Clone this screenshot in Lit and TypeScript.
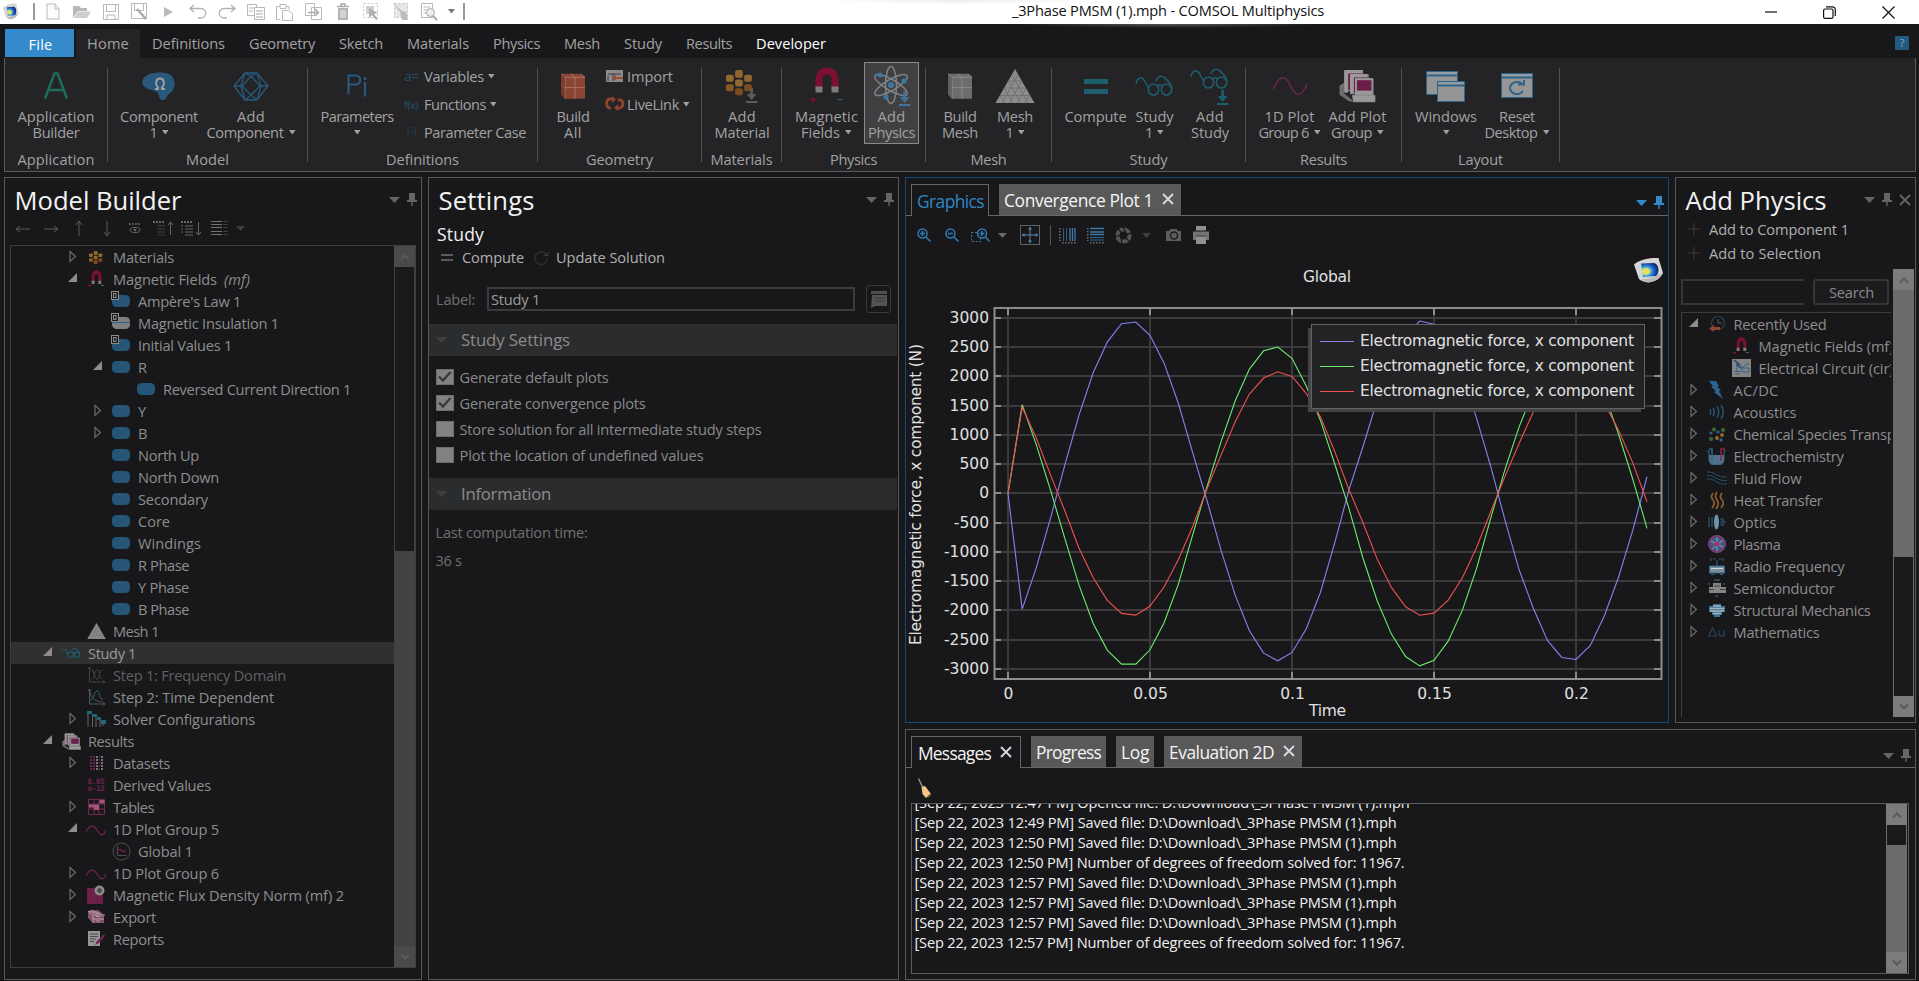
import { LitElement, html, svg, css, nothing, TemplateResult } from "lit";
import { customElement } from "lit/decorators.js";

/* ---------- text fitting ---------- */
const FAMILY = '"Open Sans"';
const ctx = document.createElement("canvas").getContext("2d")!;

/** Real text whose tracking is computed so that it advances exactly `w` pixels. */
function fit(text: string, w: number, size = 14.6, cls = "", style = "") {
  ctx.font = `${style} ${size}px ${FAMILY}`;
  const ls = (w + 1 - ctx.measureText(text).width) / text.length;
  return html`<span class="fit ${cls}" style="font-size:${size}px;letter-spacing:${ls.toFixed(3)}px">${text}</span>`;
}

/* ---------- icons ---------- */
type Icon = [number, number, TemplateResult];
const BLUE = "#28597c", TEAL = "#1d5f6e", PINK = "#6f2350", QA = "#b9b9b9";

const mats = svg`<g><rect x="0" y="4" width="5.5" height="6" rx="1.5" fill="#8f682f"/><rect x="6.500" y="0" width="5.500" height="6.500" rx="1.500" fill="#8f682f"/><rect x="13" y="4" width="5.500" height="6" rx="1.500" fill="#8f682f"/><rect x="6.500" y="8" width="5.500" height="6" rx="1.500" fill="#8f682f"/><rect x="0" y="12" width="5.500" height="6" rx="1.500" fill="#8a5a25"/><rect x="6.500" y="15.500" width="5.500" height="6" rx="1.500" fill="#7c4c1e"/><rect x="13" y="12" width="5.500" height="6" rx="1.500" fill="#7c4c1e"/></g>`;
const down = (c: string) => svg`<path d="M4.300 0h2.600v6h3.600L5.600 12 .7 6h3.600zM0 13h11.500v2H0z" fill="${c}"/>`;
const glasses = (sw: number) => svg`<g fill="none" stroke="${TEAL}" stroke-width="${sw}"><path d="M1 10C2 4 6 2 9 6c2 3 3 6 5 8"/><ellipse cx="18.500" cy="15.500" rx="5.200" ry="5.500"/><ellipse cx="31.500" cy="15.500" rx="5.200" ry="5.500"/><path d="M23 12c2-2 3-2 4 0M21 7c3-7 8-5 11-1 3 3 5 5 5 9"/></g>`;
const papers = svg`<g stroke="#9a9a9a"><path d="M1 21l4-3v13l9 9H11L1 32z" fill="#6c6c6c" stroke="#777"/><rect x="6" y="2" width="18" height="25" fill="#6a1f49"/><path d="M6 2h18v3H9v24H6z" fill="#9a9a9a"/><rect x="12" y="7" width="18" height="24" fill="#6a1f49"/><path d="M12 7h17v3H15v20h-3z" fill="#9a9a9a"/><rect x="17" y="12" width="18" height="20" fill="#9a9a9a"/><rect x="18.500" y="14" width="15" height="13" fill="#6a1f49" stroke="none"/><path d="M14 33h23v8H15z" fill="#9a9a9a"/></g>`;
const magnet = svg`<path d="M5 20V10a8 8 0 0 1 16 0v10" fill="none" stroke="#7c1031" stroke-width="7"/><path d="M1.500 17.500h7v6h-7zM17.500 17.500h7v6h-7z" fill="#7b7b7b"/>`;
const tri = svg`<path d="M20 0L39.500 34H0.500z" fill="#8c8c8c"/><path d="M17 6l16 28M13 12l13 22M9 19l9 15M5 26l5 8M23 6L7 34M27 12L14 34M31 19l-9 15M35 26l-5 8M13 12h14M9 19h22M5 26.500h30" stroke="#6c6c6c" stroke-width=".8"/>`;
const cube = (a: string, b: string, c: string) => svg`<path d="M0 1h20l4 4v25H4l-4-5z" fill="${a}"/><path d="M0 1l4 4h20M4 5v25M4 17h20M14 5v25M0 13l4 4M10 1l4 4M20 1l4 4" stroke="${b}" fill="none"/><path d="M0 1l4 4v25l-4-5z" fill="${c}" opacity=".6"/>`;
const win = (x: number, y: number, w: number, h: number) => svg`<rect x="${x + 0.5}" y="${y + 0.5}" width="${w}" height="${h}" fill="#969696" stroke="#2d6488"/><path d="M${x} ${y + 4.500}h${w}" stroke="#2d6488" stroke-width="2"/><path d="M${x + 2} ${y + 2}h${w - 3}" stroke="#8aa4b5"/>`;
const logoShape = svg`<defs><radialGradient id="lg" cx=".28" cy=".6" r=".75"><stop offset="0" stop-color="#f7e05a"/><stop offset=".28" stop-color="#d9dc70"/><stop offset=".42" stop-color="#37a5dd"/><stop offset=".7" stop-color="#1c4fb5"/><stop offset="1" stop-color="#0d1f63"/></radialGradient></defs><path d="M0 7.500C5 3 14 .5 24.500 1l4.500 15c-3 6-8 8.500-14.500 9.500C10 25 7 24 5 22z" fill="#d6d6d6"/><path d="M7 22c5 0 14-1 21-6-3 6-8 8.500-13.500 9.500C11 25 9 24 7 22z" fill="#b9b9b9"/><path d="M7 6.500L20 6c5 1 6 10 2 13L9 20z" fill="url(#lg)"/>`;
const pill = svg`<rect x="0" y="1" width="18" height="12" rx="4.500" fill="#265577"/>`;
const dBadge = svg`<rect x="-.5" y="-2.500" width="7" height="8" fill="#19191b" stroke="#8d8d8d"/><rect x="1.500" y="-.5" width="2.500" height="4" fill="none" stroke="#8d8d8d"/>`;
const wave = svg`<path d="M0 8C4 0 8 1 11 6s6 8 9 0" fill="none" stroke="${PINK}" stroke-width="1.200"/>`;
const axes = svg`<path d="M2.500 1v15H18M1 3l1.500-2L4 3M16 14l2 2-2 1.500" fill="none" stroke="#565656"/>`;

const ICONS: Record<string, Icon> = {
  logo: [16, 18, svg`<g transform="scale(.54 .64)">${logoShape}</g>`],
  bar: [2, 17, svg`<path d="M1 0v17" stroke="#777" stroke-width="1.500"/>`],
  new: [14, 17, svg`<path d="M1 1h8l4 5v10H1zM9 1v5h4" fill="#fcfcfc" stroke="${QA}"/>`],
  open: [18, 14, svg`<path d="M0 13V1h6l2 2h6v3H5z" fill="${QA}"/><path d="M5 6.500h13L14 13H1z" fill="#cfcfcf"/>`],
  save: [16, 16, svg`<path d="M.5.5h15v15H.5zM3.500.5v7h9v-7M4 15v-4h8v4" fill="none" stroke="${QA}"/>`],
  saveas: [17, 17, svg`<path d="M.5.5h15v15H.5zM3.500.5v7h9v-7" fill="none" stroke="${QA}"/><path d="M6 6l9 10" stroke="#aaa" stroke-width="2.500"/>`],
  play: [9, 10, svg`<path d="M0 0l9 5-9 5z" fill="${QA}"/>`],
  undo: [18, 15, svg`<path d="M1 4.500h11a4.500 4.500 0 0 1 0 9.500H9M5 1L1 4.500 5 8" fill="none" stroke="#b2b2b2" stroke-width="1.400"/>`],
  redo: [18, 15, svg`<path d="M17 4.500H6a4.500 4.500 0 0 0 0 9.500h3M13 1l4 3.500L13 8" fill="none" stroke="#b2b2b2" stroke-width="1.400"/>`],
  copy: [18, 16, svg`<path d="M.5.5h9v11h-9zM2 4h6M2 7h4" fill="none" stroke="${QA}"/><path d="M7.500 3.500h10v12h-10z" fill="#fff" stroke="${QA}"/><path d="M9 7h7M9 10h7M9 13h7" stroke="#aaa"/>`],
  paste: [17, 18, svg`<path d="M3.500 3.500h-3v13h4M10 3.500h3v3M4 1.500h6v4H4zM6.500 7.500h6l4 3v7h-10z" fill="none" stroke="${QA}"/>`],
  dup: [17, 17, svg`<path d="M.5.500h9v12h-9zM6.500 4.500h10v12h-10z" fill="none" stroke="${QA}"/><path d="M3 9.500h10M10 6l3.500 3.500L10 13" fill="none" stroke="#aaa" stroke-width="1.500"/>`],
  trash: [12, 17, svg`<path d="M0 3.500h12M4 3V1h4v2" stroke="#aaa" stroke-width="1.500" fill="none"/><path d="M1 5h10v12H1z" fill="#b5b5b5"/><path d="M4 7v8M6 7v8M8 7v8" stroke="#eee"/>`],
  select: [17, 17, svg`<rect x=".5" y=".5" width="14" height="14" fill="none" stroke="#c0c0c0" stroke-dasharray="2 2"/><rect x="3" y="3" width="8" height="8" fill="#d0d0d0"/><path d="M6 5l9 5-4 1 4 5-2 1-4-5-3 3z" fill="#b0b0b0"/>`],
  clear: [16, 17, svg`<rect x="1.500" y=".5" width="13" height="14" fill="#e6e6e6" stroke="#c0c0c0" stroke-dasharray="2 2"/><path d="M0 0l7 9 2 8h6l-2-8-4-1z" fill="#bdbdbd"/>`],
  find: [17, 18, svg`<path d="M.5.500h11v14H.500zM2.500 4h7M2.500 7h7M2.500 10h4" fill="none" stroke="${QA}"/><circle cx="9.500" cy="9.500" r="4" fill="#eee" stroke="#aaa"/><path d="M12 13l4 4" stroke="#aaa" stroke-width="2"/>`],
  qcaret: [7, 5, svg`<path d="M0 0h7L3.500 4.500z" fill="#777"/>`],
  caret: [7, 5, svg`<path d="M0 0h6.500L3.300 4.500z" fill="#a0a0a0"/>`],
  min: [12, 2, svg`<path d="M0 1h12" stroke="#111" stroke-width="1.200"/>`],
  restore: [13, 13, svg`<rect x=".6" y="3" width="9.400" height="9.400" rx="1.500" fill="none" stroke="#111" stroke-width="1.200"/><path d="M3 .8h6.500A2.800 2.800 0 0 1 12.300 3.600V10" fill="none" stroke="#111" stroke-width="1.200"/>`],
  close: [13, 13, svg`<path d="M.5.500l12 12M12.500.500l-12 12" stroke="#111" stroke-width="1.200"/>`],
  // ribbon
  A: [24, 26, svg`<path d="M1 25.500L10.500 0.500h3l9.500 25M5 17h14" fill="none" stroke="#1f6b57" stroke-width="2.600"/>`],
  comp: [34, 29, svg`<path d="M1 7C5 0 20-1 27 2c8 4 7 16 0 20-3 2-2 6-6 6-6 0-2-7-8-9C6 17-2 15 1 7z" fill="#28597c"/><path d="M13 17h3v-1.500c-3-3-2.500-9 2-9s5 6 2 9V17h3" fill="none" stroke="#a0a0a0" stroke-width="1.800"/>`],
  addcomp: [36, 29, svg`<path d="M12 1h12l11 13-11 14H12L1 14zM12 1l-4 13 4 14M24 1l4 13-4 14M1 14h8M28 14h7M18 4l9 10-9 9-9-9zM12 1l6 3 6-3M12 28l6-5 6 5" fill="none" stroke="${BLUE}" stroke-width="1.300"/>`],
  pi: [21, 24, svg`<path d="M1.500 20V1.500H8c7 0 7 9 0 9H2M18 8v14.500M18 3v3" fill="none" stroke="${BLUE}" stroke-width="2.200"/>`],
  pismall: [10, 12, svg`<path d="M1 10V1h3c3.500 0 3.500 5 0 5H1M8.500 4v7M8.500 1v2" fill="none" stroke="#22384c"/>`],
  geo: [24, 26, svg`<g transform="scale(1 .86)">${cube("#8b4433", "#a8786c", "#6e3427")}</g>`],
  meshcube: [24, 26, svg`<g transform="scale(1 .86)">${cube("#6c6c6c", "#8d8d8d", "#595959")}</g>`],
  import: [17, 13, svg`<rect width="17" height="12" fill="#8b8b8b"/><path d="M2 4h13M7 3v8M2 6v5" stroke="#3c3c3c"/><path d="M7 7h10v2H10v2L6 8l4-3.500V7z" fill="#a04a32"/>`],
  live: [20, 14, svg`<path d="M9 2H5C0 2 1 11 5 11h1M11 11h3c5 0 5-8 1-8h-2" fill="none" stroke="#8e432c" stroke-width="3"/><path d="M7-1l4 3.500L7 6zM13 7l-4 4 4 3z" fill="#8e432c"/>`],
  mat: [32, 34, svg`<g transform="translate(0 1) scale(1.400 1.180)">${mats}</g><g transform="translate(20 19)">${down("#5c5c5c")}</g>`],
  magnet: [34, 34, svg`<g transform="translate(4 0)">${magnet}</g><path d="M0 30.500h6M3 28v6" stroke="#7c1031" stroke-width="1.300"/><path d="M27 30.500h6" stroke="#2d5069" stroke-width="1.300"/>`],
  atom: [36, 40, svg`<g fill="none" stroke="#7f8285" stroke-width="1.500"><ellipse cx="17" cy="19" rx="5.500" ry="18.500"/><ellipse cx="17" cy="19" rx="5.500" ry="18.500" transform="rotate(60 17 19)"/><ellipse cx="17" cy="19" rx="5.500" ry="18.500" transform="rotate(-60 17 19)"/></g><g fill="#3a78a8"><circle cx="17" cy="19" r="3"/><circle cx="6" cy="9" r="2.500"/><circle cx="30" cy="15" r="2.500"/><circle cx="12" cy="31" r="2.500"/></g><g transform="translate(25 25)">${down("#3f7199")}</g>`],
  tri: [40, 34, tri],
  eq: [24, 15, svg`<path d="M0 0h24v5H0zM0 10h24v5H0z" fill="${TEAL}"/>`],
  glasses: [39, 24, glasses(1.5)],
  addglasses: [40, 38, svg`${glasses(1.5)}<g transform="translate(27 23)">${down(TEAL)}</g>`],
  wave: [36, 22, svg`<path d="M1 14C7 1 13-1 18 10s11 14 17-1" fill="none" stroke="${PINK}" stroke-width="1.500"/>`],
  papers: [38, 34, svg`<g transform="scale(.97 .8)">${papers}</g>`],
  windows: [40, 31, svg`${win(0, 0, 31, 23)}${win(11, 10, 27, 20)}`],
  reset: [33, 26, svg`${win(0, 0, 31, 24)}<path d="M22 12a7 6 0 1 0 0 6M17 11.500h6V7" fill="none" stroke="#2d6488" stroke-width="2"/>`],
  // panel chrome
  dcaret: [11, 6, svg`<path d="M0 0h11L5.500 6z" fill="currentColor"/>`],
  pin: [10, 13, svg`<path d="M2 0h6v7h2v2H5.700v4H4.300V9H0V7h2z" fill="currentColor"/>`],
  x: [12, 12, svg`<path d="M1 1l10 10M11 1L1 11" stroke="currentColor" stroke-width="1.800"/>`],
  left: [14, 8, svg`<path d="M0 4h14M4 1L0 4l4 3" stroke="#5a5a5a" fill="none"/>`],
  right: [14, 8, svg`<path d="M0 4h14M10 1l4 3-4 3" stroke="#5a5a5a" fill="none"/>`],
  up: [8, 15, svg`<path d="M4 15V0M1 4l3-4 3 4" stroke="#5a5a5a" fill="none"/>`],
  dn: [8, 15, svg`<path d="M4 0v15M1 11l3 4 3-4" stroke="#5a5a5a" fill="none"/>`],
  eye: [12, 9, svg`<path d="M0 0h12" stroke="#666" stroke-width="1.500" stroke-dasharray="2 1"/><ellipse cx="6" cy="6" rx="5" ry="2.500" fill="none" stroke="#666"/><circle cx="6" cy="6" r="1.300" fill="#666"/>`],
  coll: [20, 15, svg`<path d="M0 1h12" stroke="#666" stroke-width="2" stroke-dasharray="2 1"/><path d="M4 5h8M4 8h8M4 11h8M4 14h8" stroke="#3f3f3f"/><path d="M17.500 14V1M15 4l2.500-3L20 4" stroke="#666" fill="none"/>`],
  expd: [20, 15, svg`<path d="M0 1h12" stroke="#666" stroke-width="2" stroke-dasharray="2 1"/><path d="M0 5h2M4 5h8M0 8h2M4 8h8M0 11h2M4 11h8M4 14h8" stroke="#666"/><path d="M17.500 1v13M15 11l2.500 3 2.500-3" stroke="#666" fill="none"/>`],
  list: [17, 15, svg`<path d="M0 .5h11M0 3.500h11M0 6.500h11M0 10.500h11M0 13.500h11" stroke="#737373"/><path d="M12.500 .5h4M12.500 3.500h4M12.500 6.500h4M12.500 10.500h4M12.500 13.500h4" stroke="#444"/>`],
  smallcaret: [9, 5, svg`<path d="M0 0h9L4.500 5z" fill="#3e3e40"/>`],
  midcaret: [9, 5, svg`<path d="M0 0h9L4.500 5z" fill="#6a6a6a"/>`],
  open_t: [10, 10, svg`<path d="M9 -1v9H0z" fill="#8d8d8d"/>`],
  closed_t: [8, 12, svg`<path d="M1 .5l5.500 5L1 10.500z" fill="none" stroke="#6c6c6c" stroke-width="1.200"/>`],
  chevup: [10, 6, svg`<path d="M1 5.500l4-4 4 4" fill="none" stroke="#5a5a5a" stroke-width="2"/>`],
  chevdn: [10, 6, svg`<path d="M1 .5l4 4 4-4" fill="none" stroke="#5a5a5a" stroke-width="2"/>`],
  // tree
  t_mat: [14, 13, svg`<g transform="scale(.72 .6)">${mats}</g>`],
  t_mag: [17, 16, svg`<g transform="translate(3 0) scale(.42 .55)">${magnet}</g><path d="M0 14.500h3M1.500 13v3" stroke="#7c1031"/><path d="M13 14.500h3" stroke="#4b6070"/>`],
  pill: [18, 14, pill],
  dpill: [18, 14, svg`${pill}${dBadge}`],
  ins: [18, 14, svg`<rect x="0" y="1" width="18" height="12" rx="4.500" fill="#7f7f82"/><path d="M0 6.500h18" stroke="#2a618a"/>${dBadge}`],
  t_tri: [19, 16, svg`<g transform="scale(.475 .47)">${tri}</g>`],
  t_gl: [20, 12, svg`<g transform="scale(.51 .5)">${glasses(2.2)}</g>`],
  step1: [19, 18, svg`<g opacity=".7">${axes}<path d="M5 4c3 0 2 9 5 9s2-9 5-9M5 13c3 0 2-9 5-9s2 9 5 9M4 4c3 0 3 9 7 9" fill="none" stroke="#565656"/></g>`],
  step2: [19, 18, svg`${axes}<path d="M3 4c2 8 5 9 12 10" fill="none" stroke="#565656"/><path d="M3 12c4 0 4-9 7-9s2 9 6 8" fill="none" stroke="#266a7c"/>`],
  solver: [19, 16, svg`<path d="M0 0h5v3H0zM5 3h5v3H5zM10 6h4v3h-4zM14 9h5v4h-5z" fill="#1f6677"/><path d="M1 3v13M5.500 6v10M9 6v10M13 9v7M16 12v3" stroke="#666"/>`],
  t_pap: [19, 17, svg`<g transform="scale(.5 .4)">${papers}</g>`],
  data: [13, 15, svg`<path d="M1 0v15M4 0v15" stroke="${PINK}" stroke-width="2" stroke-dasharray="2 1"/><path d="M7 0v15" stroke="#777" stroke-width="2" stroke-dasharray="2 1"/><path d="M9.500 0v15" stroke="${PINK}" stroke-dasharray="2 1"/><path d="M12 0v15" stroke="#777" stroke-width="2" stroke-dasharray="2 1"/>`],
  tables: [17, 16, svg`<path d="M.5.500h16v15H.500zM.500 5h16M.500 10h16M6 .500v15M11 .500v15" fill="none" stroke="#76294f"/><path d="M11.500 1h5v3.500h-5zM1 5.500h10v3H1zM6 8h5v3H6z" fill="#a0577d"/>`],
  t_wave: [20, 11, wave],
  global: [19, 19, svg`<circle cx="9.500" cy="9.500" r="8.500" fill="none" stroke="#505050"/><path d="M5.500 4v9.500h9" stroke="#505050" fill="none"/><path d="M5 9c3-3 4-1 5 0s3 1 4-1" fill="none" stroke="${PINK}" stroke-width="1.200"/>`],
  flux: [18, 18, svg`<path d="M0 2h16v16H0z" fill="#6c2049"/><circle cx="12.500" cy="4.500" r="5" fill="#8b8b8b"/><path d="M12.500 2v5M10 4.500h5" stroke="#444" stroke-width="2"/>`],
  export: [17, 14, svg`<path d="M0 1l10-1 6 5v8H5L0 8z" fill="#84516a"/><path d="M0 1l5 4h12M5 5v8M5 9h11M1 1l9 3M3 0l10 4M8 6.500h4M8 11h4" stroke="#b598a5" fill="none"/>`],
  reports: [17, 16, svg`<path d="M0 0h12v15H0z" fill="#959595"/><path d="M2 3h8M2 5.500h8M2 8h6M2 10.500h4" stroke="#4a4a4a"/><path d="M16 3L9 10l-2 4 4-2 6-7z" fill="${PINK}"/>`],
  // settings
  eqs: [12, 8, svg`<path d="M0 1h12M0 6h12" stroke="#5c5c5c" stroke-width="2"/>`],
  reload: [15, 14, svg`<path d="M13 4.500A6.300 6.300 0 1 0 13.500 8M10 4.500h4V1" fill="none" stroke="#3a3a3a"/>`],
  note: [18, 18, svg`<path d="M1 1h16v3H1z" fill="#4f4f4f"/><path d="M2 5h15v11H5l-4 2z" fill="#545454"/><path d="M5 8h10M5 11h10" stroke="#393939"/>`],
  // graphics toolbar
  zin: [14, 14, svg`<circle cx="5.500" cy="5.500" r="4.500" fill="none" stroke="#2f78b0" stroke-width="1.500"/><path d="M3 5.500h5M5.500 3v5M9 9l4.500 4.500" stroke="#2f78b0" stroke-width="1.600"/>`],
  zout: [14, 14, svg`<circle cx="5.500" cy="5.500" r="4.500" fill="none" stroke="#2f78b0" stroke-width="1.500"/><path d="M3 5.500h5M9 9l4.500 4.500" stroke="#2f78b0" stroke-width="1.600"/>`],
  zbox: [19, 14, svg`<rect x=".5" y="4.500" width="9" height="9" fill="none" stroke="#2f78b0" stroke-dasharray="2 1.500"/><circle cx="11" cy="5.500" r="4.500" fill="#18181a" stroke="#2f78b0" stroke-width="1.500"/><path d="M8.500 5.500h5M11 3v5M14.500 9l4 4.500" stroke="#2f78b0" stroke-width="1.600"/>`],
  extents: [20, 20, svg`<rect x=".5" y=".5" width="19" height="19" fill="none" stroke="#626262"/><path d="M2 10h6M12 10h6M10 2v6M10 12v6M8 10h4M10 8v4" stroke="#5f86a8"/><path d="M4.500 8L2 10l2.500 2M15.500 8l2.500 2-2.500 2M8 4.500L10 2l2 2.500M8 15.500l2 2.500 2-2.500" fill="#4587bd"/>`],
  vgrid: [17, 17, svg`<path d="M.8 1v13M3 15.800h14" stroke="#707070" stroke-width="1.500" stroke-dasharray="1.500 1.500"/><path d="M4.500 1v13M7.500 1v13" stroke="#2f5a7d"/><path d="M11 1v13M13.500 1v13M16 1v13" stroke="#4179a6" stroke-width="1.300"/>`],
  hgrid: [17, 17, svg`<path d="M.8 1v13M3 15.800h14" stroke="#707070" stroke-width="1.500" stroke-dasharray="1.500 1.500"/><path d="M3 1.500h14M3 5h14M3 7.500h14" stroke="#4179a6" stroke-width="1.500"/><path d="M3 10.500h14M3 13h14" stroke="#35678f"/>`],
  aperture: [17, 17, svg`<circle cx="8.500" cy="8.500" r="6" fill="none" stroke="#565656" stroke-width="4"/><path d="M8 0l3 6M16.500 6l-6 1.500M14 14l-4.500-4M7 17l-1-6M0 10l6-2M3 2l4 4" stroke="#18181a" stroke-width="1.300"/>`],
  camera: [15, 12, svg`<path d="M0 2h3l1.500-2h6L12 2h3v10H0z" fill="#5d5d5d"/><circle cx="8" cy="6.500" r="3.500" fill="#5d5d5d" stroke="#1e1e1e" stroke-width="1.500"/>`],
  print: [16, 18, svg`<path d="M3 0h10v5H3z" fill="#8f8f8f"/><path d="M0 5.500h16V14H0z" fill="#747474"/><path d="M3 10h10v8H3z" fill="#8f8f8f"/><path d="M3 10h10M3 4.800h10" stroke="#3c3c3c"/>`],
  broom: [14, 20, svg`<path d="M.5.500L5 10" stroke="#8f8f8f" stroke-width="1.500"/><path d="M3.500 9L7 8l6 8-5 4-3.500-4z" fill="#f4c684"/><path d="M9 19l3-3M10 19.500l2.500-2.500" stroke="#a86b2a"/>`],
  // add physics
  plus: [12, 12, svg`<path d="M0 6h12M6 0v12" stroke="#3c3c3e"/>`],
  recent: [16, 16, svg`<circle cx="9" cy="7" r="6.500" fill="none" stroke="#2f4256" stroke-width="1.200"/><path d="M9 3v4h4" fill="none" stroke="#4a5a68"/><path d="M0 12.500L5 9v2h6v3H5v2z" fill="#8d4530"/>`],
  circuit: [19, 18, svg`<rect width="19" height="18" fill="#858585"/><path d="M5 3v9M2 12.500h7M3.500 15h4M8 5l3 4 3-4h3M9 9h8v4h-6z" fill="none" stroke="#35618a"/><path d="M2 1l5 4-2 1 4 3" stroke="#234b70" fill="none" stroke-width="1.500"/>`],
  acdc: [15, 18, svg`<path d="M0 0h7l3 5-2 .5 4 4-2 .500 4 8L5 11l2-.5-5-5 2-.5z" fill="#2b6491"/>`],
  acoustics: [16, 14, svg`<path d="M1 4q1.500 3 0 6M4 3q2.500 4 0 8M8 1.500q3.500 5.500 0 11M12 0q4.500 7 0 14" fill="none" stroke="#255474" stroke-width="1.500"/>`],
  chem: [16, 15, svg`<g fill="#3f6b3c"><circle cx="5" cy="2.500" r="2"/><circle cx="14" cy="3" r="2"/><circle cx="2" cy="12" r="2"/></g><g fill="#2b6491"><circle cx="2" cy="6" r="1.600"/><circle cx="9" cy="5" r="1.600"/><circle cx="12" cy="13" r="1.700"/></g><g fill="#9c6a2a"><circle cx="13" cy="8" r="1.900"/><circle cx="8" cy="11" r="1.900"/></g>`],
  echem: [19, 17, svg`<path d="M2 7h15v6q-1 4-4 4H6q-3 0-4-4z" fill="#50708c"/><path d="M0 3h2v9q1 4 4 4.500h7q3-.5 4-4.500V3h2" fill="none" stroke="#3f6482"/><path d="M2 1h3v12" fill="none" stroke="#2b6491" stroke-width="1.500"/><path d="M14 13V1h4" fill="none" stroke="#93224a" stroke-width="1.500"/>`],
  fluid: [20, 14, svg`<path d="M0 1c8-1 9 6 20 5M0 4.500c8-1 9 6 20 5M0 8c8-1 9 6 20 5" fill="none" stroke="#25506f"/>`],
  heat: [12, 17, svg`<path d="M2 1q-3 4 0 7t-1 8M6 0q-3 4 0 8t-1 9M11 1q-3 4 0 7t-1 8" fill="none" stroke="#8d5f2a" stroke-width="1.700"/>`],
  optics: [18, 16, svg`<path d="M1 3v10M4 3v10" stroke="#2a4c66" stroke-width="1.500"/><ellipse cx="8.500" cy="8" rx="2.500" ry="7.500" fill="#6b93ab"/><path d="M12 8h6M12 5l4 2M12 11l4-2M14 4l2 1M14 12l2-1" stroke="#2a5c80"/>`],
  plasma: [18, 18, svg`<circle cx="9" cy="9" r="8.500" fill="#604274" stroke="#7a4b86"/><circle cx="9" cy="9" r="6" fill="#3c6089"/><path d="M9 2v14M3 6l12 6M15 5L4 14" stroke="#86a5c0"/><circle cx="9" cy="9" r="2.500" fill="#b32d6a"/>`],
  radio: [16, 18, svg`<path d="M8 3v7M2 1v3M5 1v2M11 1v2M14 1v3" stroke="#31668c"/><rect x=".5" y="9" width="15" height="7" fill="#7a8d99" stroke="#2b6491"/><path d="M2 11.500h12" stroke="#d2d2d2"/><path d="M2 17.500h3M11 17.500h3" stroke="#2b6491"/>`],
  semi: [18, 19, svg`<path d="M5 4h8v4h5v6H1V8h4z" fill="#858585"/><path d="M1 10.500h5M12 10.500h6M6 7h6" stroke="#444"/><path d="M6 1h6M0 5h2M15 5h2M7 17h3" stroke="#2d4257" stroke-width="2"/>`],
  struct: [16, 13, svg`<path d="M4 0h8v2h4v6h-3v3h-2v2H5v-2H3V8H0V2h4z" fill="#3b7199"/><path d="M4 2h8M1 4.500h14M1 7h14M4 9.500h8" stroke="#a3b2bb" stroke-width="1.300"/>`],
  math: [17, 10, svg`<path d="M4.500 1L8.500 9H.500zM11 3v4q0 2 2.500 2T16 7V3M16 3v6" fill="none" stroke="#2a4257" stroke-width="1.200"/>`],
};

const icon = (name: string, cls = "") => {
  const [w, h, body] = ICONS[name];
  return html`<svg class="ic ${cls}" width=${w} height=${h} viewBox="0 0 ${w} ${h}">${body}</svg>`;
};

/* ---------- data ---------- */
const QUICK = ["new", "open", "save", "saveas", "play", "undo", "redo", "copy", "paste", "dup", "trash", "select", "clear", "find"];
const TABS: [string, number][] = [["Definitions", 72], ["Geometry", 65], ["Sketch", 43], ["Materials", 61], ["Physics", 46], ["Mesh", 35], ["Study", 37], ["Results", 45], ["Developer", 69]];

interface Big { icon: string; w: number; l1: [string, number]; l2?: [string, number]; caret?: boolean; on?: boolean }
interface Small { icon?: string; glyph?: string; text: string; w: number; caret?: boolean }
interface Group { label: [string, number]; w: number; pad?: number; big: Big[]; small?: Small[] }
const GROUPS: Group[] = [
  { label: ["Application", 76], w: 103, big: [{ icon: "A", w: 102, l1: ["Application", 76], l2: ["Builder", 46] }] },
  { label: ["Model", 42], w: 200, pad: 5, big: [{ icon: "comp", w: 92, l1: ["Component", 77], l2: ["1", 6], caret: true }, { icon: "addcomp", w: 92, l1: ["Add", 27], l2: ["Component", 76], caret: true }] },
  { label: ["Definitions", 72], w: 230, pad: 5, big: [{ icon: "pi", w: 88, l1: ["Parameters", 72], caret: true }],
    small: [{ glyph: "a=", text: "Variables", w: 59, caret: true }, { glyph: "f(x)", text: "Functions", w: 61, caret: true }, { icon: "pismall", text: "Parameter Case", w: 101 }] },
  { label: ["Geometry", 66], w: 164, pad: 4, big: [{ icon: "geo", w: 62, l1: ["Build", 32], l2: ["All", 17] }],
    small: [{ icon: "import", text: "Import", w: 45 }, { icon: "live", text: "LiveLink", w: 51, caret: true }] },
  { label: ["Materials", 61], w: 80, big: [{ icon: "mat", w: 80, l1: ["Add", 27], l2: ["Material", 54] }] },
  { label: ["Physics", 46], w: 144, pad: 7, big: [{ icon: "magnet", w: 75, l1: ["Magnetic", 62], l2: ["Fields", 38], caret: true }, { icon: "atom", w: 55, l1: ["Add", 27], l2: ["Physics", 46], on: true }] },
  { label: ["Mesh", 35], w: 126, pad: 6, big: [{ icon: "meshcube", w: 56, l1: ["Build", 32], l2: ["Mesh", 35] }, { icon: "tri", w: 54, l1: ["Mesh", 35], l2: ["1", 6], caret: true }] },
  { label: ["Study", 37], w: 194, pad: 7, big: [{ icon: "eq", w: 73, l1: ["Compute", 61] }, { icon: "glasses", w: 45, l1: ["Study", 37], l2: ["1", 6], caret: true }, { icon: "addglasses", w: 66, l1: ["Add", 27], l2: ["Study", 37] }] },
  { label: ["Results", 46], w: 156, pad: 9, big: [{ icon: "wave", w: 69, l1: ["1D Plot", 49], l2: ["Group 6", 49], caret: true }, { icon: "papers", w: 67, l1: ["Add Plot", 57], l2: ["Group", 40], caret: true }] },
  { label: ["Layout", 44], w: 158, pad: 7, big: [{ icon: "windows", w: 74, l1: ["Windows", 61], caret: true }, { icon: "reset", w: 68, l1: ["Reset", 35], l2: ["Desktop", 52], caret: true }] },
];

type Node = [level: number, exp: "" | "open" | "closed", icon: string, text: string, w: number];
const MODEL: Node[] = [
  [1, "closed", "t_mat", "Materials", 60], [1, "open", "t_mag", "Magnetic Fields", 103],
  [2, "", "dpill", "Ampère's Law 1", 102], [2, "", "ins", "Magnetic Insulation 1", 140], [2, "", "dpill", "Initial Values 1", 93],
  [2, "open", "pill", "R", 8], [3, "", "pill", "Reversed Current Direction 1", 187],
  [2, "closed", "pill", "Y", 8], [2, "closed", "pill", "B", 8], [2, "", "pill", "North Up", 60], [2, "", "pill", "North Down", 80],
  [2, "", "pill", "Secondary", 69], [2, "", "pill", "Core", 31], [2, "", "pill", "Windings", 62], [2, "", "pill", "R Phase", 50],
  [2, "", "pill", "Y Phase", 50], [2, "", "pill", "B Phase", 50], [1, "", "t_tri", "Mesh 1", 45], [0, "open", "t_gl", "Study 1", 47],
  [1, "", "step1", "Step 1: Frequency Domain", 172], [1, "", "step2", "Step 2: Time Dependent", 160], [1, "closed", "solver", "Solver Configurations", 141],
  [0, "open", "t_pap", "Results", 45], [1, "closed", "data", "Datasets", 56], [1, "", "derived", "Derived Values", 97], [1, "closed", "tables", "Tables", 40],
  [1, "open", "t_wave", "1D Plot Group 5", 105], [2, "", "global", "Global 1", 54], [1, "closed", "t_wave", "1D Plot Group 6", 105],
  [1, "closed", "flux", "Magnetic Flux Density Norm (mf) 2", 230], [1, "closed", "export", "Export", 42], [1, "", "reports", "Reports", 50],
];
const PHYS: Node[] = [
  [0, "open", "recent", "Recently Used", 92], [1, "", "t_mag", "Magnetic Fields (mf)", 134], [1, "", "circuit", "Electrical Circuit (cir)", 134],
  [0, "closed", "acdc", "AC/DC", 44], [0, "closed", "acoustics", "Acoustics", 62], [0, "closed", "chem", "Chemical Species Transport", 180],
  [0, "closed", "echem", "Electrochemistry", 109], [0, "closed", "fluid", "Fluid Flow", 67], [0, "closed", "heat", "Heat Transfer", 88],
  [0, "closed", "optics", "Optics", 42], [0, "closed", "plasma", "Plasma", 46], [0, "closed", "radio", "Radio Frequency", 110],
  [0, "closed", "semi", "Semiconductor", 100], [0, "closed", "struct", "Structural Mechanics", 136], [0, "closed", "math", "Mathematics", 85],
];
const LOG: [string, string, number][] = [
  ["12:47", "Opened file: D:\\Download\\_3Phase PMSM (1).mph", 494], ["12:49", "Saved file: D:\\Download\\_3Phase PMSM (1).mph", 481],
  ["12:50", "Saved file: D:\\Download\\_3Phase PMSM (1).mph", 481], ["12:50", "Number of degrees of freedom solved for: 11967.", 489],
  ["12:57", "Saved file: D:\\Download\\_3Phase PMSM (1).mph", 481], ["12:57", "Saved file: D:\\Download\\_3Phase PMSM (1).mph", 481],
  ["12:57", "Saved file: D:\\Download\\_3Phase PMSM (1).mph", 481], ["12:57", "Number of degrees of freedom solved for: 11967.", 489],
];

/* ---------- chart ---------- */
const SERIES: [string, number[]][] = [
  ["#8583f2", [0, -1980, -1265, -420, 480, 1337, 2060, 2590, 2898, 2927, 2700, 2220, 1535, 700, -110, -970, -1740, -2350, -2732, -2863, -2720, -2320, -1695, -857, 50, 800, 1590, 2230, 2700, 2944, 2890, 2600, 2050, 1280, 457, -460, -1312, -1968, -2520, -2806, -2840, -2605, -2093, -1430, -630, 283]],
  ["#6cec6c", [0, 1515, 823, 50, -770, -1570, -2225, -2685, -2920, -2920, -2675, -2207, -1552, -715, 100, 880, 1582, 2123, 2436, 2500, 2308, 1833, 1250, 510, -250, -1110, -1837, -2407, -2790, -2950, -2856, -2527, -1997, -1284, -420, 410, 1140, 1740, 2220, 2480, 2450, 2230, 1700, 1010, 240, -598]],
  ["#f05050", [0, 1470, 940, 310, -297, -940, -1444, -1830, -2053, -2082, -1928, -1598, -1130, -572, 70, 653, 1222, 1696, 1970, 2077, 1998, 1707, 1308, 720, 70, -504, -1125, -1609, -1940, -2085, -2048, -1826, -1444, -925, -310, 290, 855, 1395, 1800, 2020, 2050, 1900, 1540, 1080, 520, -145]],
];
const px = (i: number) => 1008 + i * 14.2;
const py = (v: number) => 493.3 - v * 0.0585;

@customElement("force-plot")
class ForcePlot extends LitElement {
  static styles = css`
    :host { display: block; }
    svg { display: block; }
    text { font-family: "DejaVu Sans", sans-serif; font-size: 15.5px; fill: #e0e0e0; }
  `;
  render() {
    const ys = Array.from({ length: 13 }, (_, i) => 3000 - i * 500);
    const xs: [number, string][] = [[0, "0"], [10, "0.05"], [20, "0.1"], [30, "0.15"], [40, "0.2"]];
    return html`<svg width="762" height="469" viewBox="906 253 762 469">
      <text x="1303" y="282" textLength="48">Global</text>
      <g transform="translate(1634 257)">${logoShape}</g>
      <g stroke="#3b3b3d" stroke-width="2">
        ${ys.map((v) => svg`<path d="M995 ${Math.round(py(v))}H1661"/>`)}
        ${xs.map(([i]) => svg`<path d="M${px(i)} 308V679"/>`)}
      </g>
      <g stroke="#8c8c8c" stroke-width="2" fill="none">
        <path d="M994.5 308H1661.5V679H994.500z"/>
        ${ys.map((v) => svg`<path d="M995 ${Math.round(py(v))}h6M1661 ${Math.round(py(v))}h-7"/>`)}
        ${xs.map(([i]) => svg`<path d="M${px(i)} 308v7M${px(i)} 679v-7"/>`)}
      </g>
      ${SERIES.map(([c, d]) => svg`<polyline fill="none" stroke="${c}" stroke-width="1.100" points="${d.map((v, i) => `${px(i)},${py(v)}`).join(" ")}"/>`)}
      ${ys.map((v) => svg`<text x="989" y="${Math.round(py(v)) + 5}" text-anchor="end">${v}</text>`)}
      ${xs.map(([i, t]) => svg`<text x="${px(i) + 0.5}" y="699" text-anchor="middle">${t}</text>`)}
      <text x="1309" y="716" textLength="37">Time</text>
      <text transform="translate(920.500 645) rotate(-90)" textLength="301">Electromagnetic force, x component (N)</text>
      <rect x="1308" y="328" width="333" height="84" fill="#454547"/>
      <rect x="1311.5" y="324.500" width="333" height="84" fill="#232325" stroke="#636363"/>
      ${SERIES.map(([c], i) => svg`<path d="M1320 ${341.5 + i * 25}h34" stroke="${c}" stroke-width="1.200"/><text x="1360" y="${346 + i * 25}" textLength="274">Electromagnetic force, x component</text>`)}
    </svg>`;
  }
}

/* ---------- shell ---------- */
@customElement("app-root")
class AppRoot extends LitElement {
  static styles = css`
    * { box-sizing: border-box; }
    :host { display: flex; flex-direction: column; width: 1919px; height: 981px; overflow: hidden; background: #18181a; color: #a2a2a2; font: 14.6px "Open Sans", sans-serif; }
    .ic { display: block; flex: none; overflow: visible; }
    .fit { white-space: pre; flex: none; }
    .mf { font-style: italic; margin-left: 7px; }

    .title { height: 24px; flex: none; background: radial-gradient(140px 4px at 958px 0, #ebebeb, #fff); color: #111; display: grid; grid-template-columns: 33px 5px 406px 20px 1fr 180px; align-items: center; padding-bottom: 1px; }
    .title > .ic { margin-left: 3px; }
    .title .sep { justify-self: start; margin: 0; }
    .quick { display: grid; grid-template-columns: repeat(14, 29px); justify-items: center; align-items: center; }
    .quickend { display: flex; align-items: center; gap: 8px; padding-left: 4px; }
    .caption { padding-left: 548px; line-height: 18px; margin-top: -3px; }
    .winbtns { display: grid; grid-template-columns: repeat(3, 58.5px); justify-items: center; align-items: center; padding-top: 1px; margin-left: 3px; }

    .tabs { height: 34px; flex: none; display: flex; padding: 5px 10px 0 5px; background: radial-gradient(155px 4px at 1168px 0, #555, #18181a); line-height: 29px; }
    .file { width: 69px; height: 28px; background: #348acb; color: #fff; text-align: center; line-height: 30px; padding-left: 2px; }
    .home { width: 64px; margin-left: 2px; background: #242426; text-align: center; }
    .tab { padding: 0 12px; }
    .tab:last-of-type { color: #fff; }
    .help { margin: 7px 0 0 auto; width: 14px; height: 14px; background: #235a82; border-radius: 1px; color: #8aa4b8; font-size: 11px; line-height: 14px; text-align: center; }

    .ribbon { margin: 0 3px 0 4px; height: 114px; flex: none; background: #242426; border: solid #5b5b5d; border-width: 0 1px 1px 1px; display: flex; }
    .group { height: 94px; margin-top: 10px; border-right: 1px solid #505052; display: flex; flex-direction: column; flex: none; }
    .tools { display: flex; height: 82px; margin-top: -6px; flex: none; }
    .big { display: flex; flex-direction: column; align-items: center; line-height: 16px; flex: none; }
    .big .pic { height: 46px; display: flex; align-items: center; padding-top: 2px; justify-content: center; }
    .big.on { background: #404042; outline: 1px solid #8a8a8c; outline-offset: -1px; }
    .line { display: flex; align-items: center; gap: 5px; height: 16px; }
    .smalls { display: flex; flex-direction: column; gap: 6px; padding-top: 3px; }
    .small { display: flex; align-items: center; height: 22px; gap: 3px; }
    .small .slot { width: 20px; display: flex; justify-content: center; color: #255272; font-size: 13px; letter-spacing: -0.5px; }
    .small .ic:last-child { margin-left: 1px; }
    .small.fx .slot { font-size: 11px; }
    .glabel { text-align: center; line-height: 18px; height: 18px; flex: none; margin-top: 6px; }

    .main { display: flex; gap: 6px; padding: 5px 3px 0 4px; flex: 1; min-height: 0; }
    .panel { border: 1px solid #58585a; background: #18181a; display: flex; flex-direction: column; min-width: 0; }
    .model { width: 418px; height: 803px; }
    .settings { width: 471px; height: 803px; }
    .right { width: 1011px; display: flex; flex-direction: column; gap: 6px; }
    .upper { display: flex; gap: 6px; height: 546px; }
    .graphics { width: 764px; border-color: #164a76; }
    .physics { width: 241px; }
    .messages { height: 251px; }
    .head { height: 44px; display: flex; padding: 0 4px 0 9.5px; color: #f2f2f2; line-height: 45px; }
    .chrome { margin-left: auto; display: flex; gap: 7px; color: #656567; height: 13px; align-items: center; }
    .head .chrome { margin-top: 15px; }

    .mtools { display: grid; grid-template-columns: repeat(8, 28px) 14px; justify-items: center; align-items: center; height: 15px; margin: -1px 0 9px 4px; }
    .treebox { margin-left: 5px; width: 406px; height: 723px; border: 1px solid #3e3e40; display: flex; color: #8e8e8e; }
    .tree { flex: 1; min-width: 0; overflow: hidden; }
    .node { height: 22px; display: flex; align-items: center; line-height: 22px; padding-left: calc(29px + var(--lv) * 25px); }
    .exp { width: 16px; display: flex; justify-content: center; flex: none; }
    .nic { width: 30px; display: flex; justify-content: center; flex: none; margin-right: 2px; }
    .node.sel { background: #303030; color: #9a9a9a; }
    .node.dim { color: #606060; }
    .derived { font: 7.5px/7px "DejaVu Sans Mono", monospace; color: #6f2350; text-align: center; letter-spacing: -0.3px; font-weight: bold; }

    .sb { width: 21px; display: flex; flex-direction: column; flex: none; background: var(--track); }
    .sbb { height: 21px; background: var(--btn); display: flex; align-items: center; justify-content: center; flex: none; }
    .sbb:last-child { margin-top: auto; }
    .thumb { background: #1a1a1c; margin: 0 1px; }
    .sb.dim { --track: #424244; --btn: #4a4a4a; }
    .sb.lit { --track: #6b6b6b; --btn: #7b7b7b; }
    .model .thumb { height: 284px; }

    .sub { color: #f0f0f0; padding-left: 8px; line-height: 24px; height: 24px; }
    .sactions { height: 23px; display: flex; align-items: center; padding-left: 12px; color: #b0b0b0; line-height: 23px; }
    .sactions .a { margin: 0 10px 0 9px; }
    .sactions .b { margin-left: 7px; }
    .labelrow { margin-top: 16px; height: 28px; display: flex; align-items: center; padding-left: 7px; color: #707070; }
    .input { width: 368px; height: 24px; border: 2px solid #3c3c3e; margin-left: 12px; padding-left: 2px; line-height: 20px; color: #9d9d9d; }
    .notebtn { width: 25px; height: 28px; border: 1.5px solid #39393b; border-radius: 3px; margin-left: 11px; display: flex; align-items: center; justify-content: center; }
    .section { height: 32px; background: #2b2c2e; margin-right: 1px; display: flex; align-items: center; padding-left: 7px; color: #8b8b8b; line-height: 30px; }
    .section.first { margin-top: 11px; }
    .section .ic { margin-right: 14px; color: #3f3f41; }
    .section .fit { margin-top: -1px; }
    .checks { padding: 8px 0 10px 7px; height: 122px; }
    .check { height: 26px; display: flex; align-items: center; gap: 5.5px; color: #8a8a8a; line-height: 26px; }
    .box { width: 18px; height: 16px; background: #828282; border: 1px solid #6d6d6d; }
    .info { padding-left: 6.5px; color: #707070; line-height: 28px; padding-top: 8px; display: flex; flex-direction: column; }

    .strip { height: 38px; flex: none; display: flex; align-items: flex-end; gap: 10px; padding: 0 4px 0 5px; border-bottom: 1px solid #666668; line-height: 32px; color: #f4f4f4; }
    .dtab { height: 31px; background: #595959; display: flex; align-items: center; padding: 0 5px; color: #f4f4f4; gap: 10px; }
    .dtab .ic { color: #d8dbe6; margin-top: -2px; }
    .dtab .ic:last-child { margin: -2px 2px 0 -1px; }
    .dtab.act { height: 32px; margin-bottom: -1px; background: #18181a; border: 1px solid #666668; border-bottom: 0; padding: 0 6px; }
    .graphics .act { color: #2f86c6; padding: 0 4px 0 5px; }
    .graphics .chrome { color: #3489cb; margin-bottom: 6px; }
    .messages .chrome { margin-bottom: 5px; }
    .gtools { height: 37px; display: grid; grid-template-columns: 28px 28px 29px 15px 40px 3px 28px 28px 28px 19px 3px 28px 28px; justify-items: center; align-items: center; padding: 1px 0 0 4px; }
    .vsep { width: 1px; height: 20px; background: #555; justify-self: start; }

    .add { height: 24px; display: flex; align-items: center; padding-left: 12px; gap: 9px; line-height: 24px; color: #b0b0b0; }
    .add.first { margin-top: -5px; }
    .pbody { display: flex; justify-content: space-between; height: 448px; padding: 0 1px 0 5px; margin-top: 4px; }
    .pleft { width: 210px; padding-top: 10px; }
    .search { display: flex; gap: 9px; }
    .sinput { width: 123px; height: 26px; border: 2px solid #363638; border-right: 0; }
    .sbtn { width: 76px; height: 26px; border: 2px solid #363638; border-radius: 3px; text-align: center; line-height: 23px; background: #1c1c1e; color: #8a8a8a; padding-left: 1px; }
    .ptree { margin-top: 7px; height: 405px; border: 1px solid #3e3e40; border-width: 1px 0 0 1px; overflow: hidden; color: #8e8e8e; }
    .ptree .node { padding-left: calc(3.5px + var(--lv) * 25px); }
    .physics .thumb { height: 139px; margin-top: auto; }
    .physics .sbb:last-child { margin-top: 0; }

    .mbar { height: 35px; padding: 10px 0 0 12px; }
    .logbox { margin: 0 6px 0 5px; height: 171px; border: 1px solid #5c5c5e; display: flex; }
    .log { flex: 1; overflow: hidden; padding-left: 2.500px; color: #f0f0f0; }
    .msg { height: 20px; line-height: 20px; display: flex; }
    .msg:first-child { margin-top: -12px; }
    .messages .thumb { height: 20px; }
    .messages .sb { margin-right: 1px; }
  `;

  private big(b: Big) {
    return html`<div class="big ${b.on ? "on" : ""}" style="width:${b.w}px">
      <div class="pic">${icon(b.icon)}</div>
      <div class="line">${fit(...b.l1)}</div>
      <div class="line">${b.l2 ? fit(...b.l2) : nothing}${b.caret ? icon("caret") : nothing}</div>
    </div>`;
  }
  private small(s: Small) {
    return html`<div class="small ${s.glyph === "f(x)" ? "fx" : ""}"><div class="slot">${s.icon ? icon(s.icon) : s.glyph}</div>${fit(s.text, s.w)}${s.caret ? icon("caret") : nothing}</div>`;
  }
  private node([lv, exp, ic, text, w]: Node) {
    const cls = text === "Study 1" ? "sel" : text.startsWith("Step 1") ? "dim" : "";
    return html`<div class="node ${cls}" style="--lv:${lv}">
      <div class="exp">${exp ? icon(exp + "_t") : nothing}</div>
      <div class="nic">${ic === "derived" ? html`<div class="derived">8.85<br />e-12</div>` : icon(ic)}</div>
      ${fit(text, w)}${text === "Magnetic Fields" ? fit("(mf)", 25, 14.6, "mf", "italic") : nothing}
    </div>`;
  }
  private scroll(kind: string) {
    return html`<div class="sb ${kind}"><div class="sbb">${icon("chevup")}</div><div class="thumb"></div><div class="sbb">${icon("chevdn")}</div></div>`;
  }
  private check(text: string, w: number, on: boolean) {
    return html`<div class="check"><div class="box">${on ? html`<svg class="ic" width="16" height="14" viewBox="0 0 16 14"><path d="M2 6.500l4 4L13.500 2" fill="none" stroke="#3a3a3a" stroke-width="2.400" /></svg>` : nothing}</div>${fit(text, w)}</div>`;
  }

  render() {
    return html`
      <div class="title">
        ${icon("logo")}${icon("bar", "sep")}
        <div class="quick">${QUICK.map((q) => icon(q))}</div>
        <div class="quickend">${icon("qcaret")}${icon("bar")}</div>
        <div class="caption">${fit("_3Phase PMSM (1).mph - COMSOL Multiphysics", 311)}</div>
        <div class="winbtns">${icon("min")}${icon("restore")}${icon("close")}</div>
      </div>
      <div class="tabs">
        <div class="file">${fit("File", 23)}</div>
        <div class="home">${fit("Home", 41)}</div>
        ${TABS.map(([t, w]) => html`<span class="tab">${fit(t, w)}</span>`)}
        <div class="help">?</div>
      </div>
      <div class="ribbon">
        ${GROUPS.map((g) => html`<div class="group" style="width:${g.w}px">
          <div class="tools" style="padding-left:${g.pad ?? 0}px">
            ${g.big.map((b) => this.big(b))}
            ${g.small ? html`<div class="smalls">${g.small.map((s) => this.small(s))}</div>` : nothing}
          </div>
          <div class="glabel">${fit(...g.label)}</div>
        </div>`)}
      </div>
      <div class="main">
        <div class="panel model">
          <div class="head">${fit("Model Builder", 166, 25.6)}<div class="chrome">${icon("dcaret")}${icon("pin")}</div></div>
          <div class="mtools">${["left", "right", "up", "dn", "eye", "coll", "expd", "list", "smallcaret"].map((i) => icon(i))}</div>
          <div class="treebox">
            <div class="tree">${MODEL.map((n) => this.node(n))}</div>
            ${this.scroll("dim")}
          </div>
        </div>
        <div class="panel settings">
          <div class="head">${fit("Settings", 95, 25.6)}<div class="chrome">${icon("dcaret")}${icon("pin")}</div></div>
          <div class="sub">${fit("Study", 46, 17.5)}</div>
          <div class="sactions">${icon("eqs")}<span class="a">${fit("Compute", 61)}</span>${icon("reload")}<span class="b">${fit("Update Solution", 108)}</span></div>
          <div class="labelrow">${fit("Label:", 38)}<div class="input">${fit("Study 1", 48)}</div><div class="notebtn">${icon("note")}</div></div>
          <div class="section first">${icon("dcaret")}${fit("Study Settings", 108, 16.8)}</div>
          <div class="checks">
            ${this.check("Generate default plots", 148, true)}${this.check("Generate convergence plots", 185, true)}
            ${this.check("Store solution for all intermediate study steps", 301, false)}${this.check("Plot the location of undefined values", 243, false)}
          </div>
          <div class="section">${icon("dcaret")}${fit("Information", 89, 16.8)}</div>
          <div class="info">${fit("Last computation time:", 151)}${fit("36 s", 25)}</div>
        </div>
        <div class="right">
          <div class="upper">
            <div class="panel graphics">
              <div class="strip">
                <div class="dtab act">${fit("Graphics", 66, 17.4)}</div>
                <div class="dtab">${fit("Convergence Plot 1", 148, 17.4)}${icon("x")}</div>
                <div class="chrome">${icon("dcaret")}${icon("pin")}</div>
              </div>
              <div class="gtools">
                ${icon("zin")}${icon("zout")}${icon("zbox")}${icon("midcaret")}${icon("extents")}<div class="vsep"></div>
                ${icon("vgrid")}${icon("hgrid")}${icon("aperture")}${icon("smallcaret")}<i></i>${icon("camera")}${icon("print")}
              </div>
              <force-plot></force-plot>
            </div>
            <div class="panel physics">
              <div class="head">${fit("Add Physics", 140, 25.6)}<div class="chrome">${icon("dcaret")}${icon("pin")}${icon("x")}</div></div>
              <div class="add first">${icon("plus")}${fit("Add to Component 1", 139)}</div>
              <div class="add">${icon("plus")}${fit("Add to Selection", 111)}</div>
              <div class="pbody">
                <div class="pleft">
                  <div class="search"><div class="sinput"></div><div class="sbtn">${fit("Search", 44)}</div></div>
                  <div class="ptree">${PHYS.map((n) => this.node(n))}</div>
                </div>
                ${this.scroll("lit")}
              </div>
            </div>
          </div>
          <div class="panel messages">
            <div class="strip">
              <div class="dtab act">${fit("Messages", 72, 17.4)}${icon("x")}</div>
              <div class="dtab">${fit("Progress", 64, 17.4)}</div>
              <div class="dtab">${fit("Log", 27, 17.4)}</div>
              <div class="dtab">${fit("Evaluation 2D", 104, 17.4)}${icon("x")}</div>
              <div class="chrome">${icon("dcaret")}${icon("pin")}</div>
            </div>
            <div class="mbar">${icon("broom")}</div>
            <div class="logbox">
              <div class="log">${LOG.map(([time, t, w]) => html`<div class="msg">${fit(`[Sep 22, 2023 ${time} PM] ${t}`, w)}</div>`)}</div>
              ${this.scroll("lit")}
            </div>
          </div>
        </div>
      </div>`;
  }
}
